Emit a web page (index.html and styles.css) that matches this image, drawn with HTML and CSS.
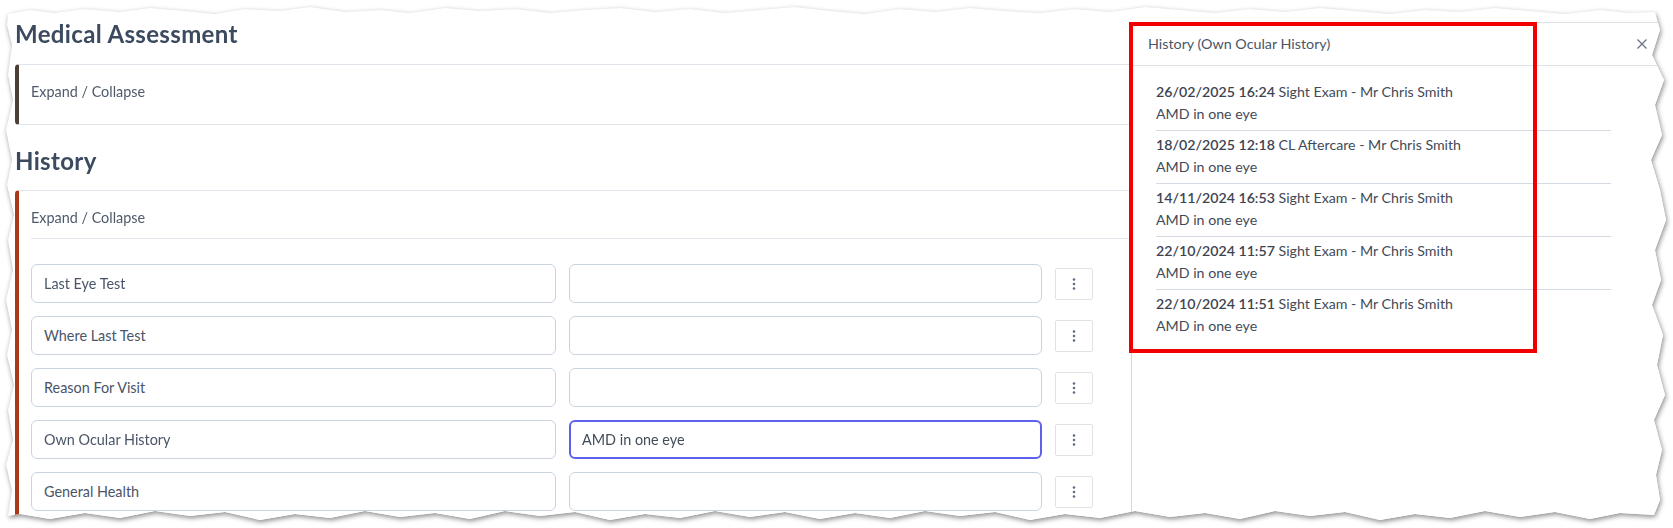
FILE: index.html
```html
<!DOCTYPE html>
<html lang="en">
<head>
<meta charset="utf-8">
<title>Medical Assessment</title>
<link rel="stylesheet" href="styles.css">
</head>
<body>
<div class="frame">
  <div class="sheet">
    <main class="main">
      <h2 class="section-title">Medical Assessment</h2>
      <div class="card card-dark">
        <div class="card-header card-header-collapsed">Expand / Collapse</div>
      </div>

      <h2 class="section-title section-title-gap">History</h2>
      <div class="card card-rust">
        <div class="card-header">Expand / Collapse</div>
        <div class="card-body">
          <div class="field-row">
            <div class="field-box">Last Eye Test</div>
            <div class="field-box"></div>
            <button class="menu-btn" type="button" aria-label="More"><svg width="4" height="12" viewBox="0 0 4 12"><circle cx="2" cy="1.5" r="1.3"/><circle cx="2" cy="6" r="1.3"/><circle cx="2" cy="10.5" r="1.3"/></svg></button>
          </div>
          <div class="field-row">
            <div class="field-box">Where Last Test</div>
            <div class="field-box"></div>
            <button class="menu-btn" type="button" aria-label="More"><svg width="4" height="12" viewBox="0 0 4 12"><circle cx="2" cy="1.5" r="1.3"/><circle cx="2" cy="6" r="1.3"/><circle cx="2" cy="10.5" r="1.3"/></svg></button>
          </div>
          <div class="field-row">
            <div class="field-box">Reason For Visit</div>
            <div class="field-box"></div>
            <button class="menu-btn" type="button" aria-label="More"><svg width="4" height="12" viewBox="0 0 4 12"><circle cx="2" cy="1.5" r="1.3"/><circle cx="2" cy="6" r="1.3"/><circle cx="2" cy="10.5" r="1.3"/></svg></button>
          </div>
          <div class="field-row">
            <div class="field-box">Own Ocular History</div>
            <div class="field-box field-focus">AMD in one eye</div>
            <button class="menu-btn" type="button" aria-label="More"><svg width="4" height="12" viewBox="0 0 4 12"><circle cx="2" cy="1.5" r="1.3"/><circle cx="2" cy="6" r="1.3"/><circle cx="2" cy="10.5" r="1.3"/></svg></button>
          </div>
          <div class="field-row">
            <div class="field-box">General Health</div>
            <div class="field-box"></div>
            <button class="menu-btn" type="button" aria-label="More"><svg width="4" height="12" viewBox="0 0 4 12"><circle cx="2" cy="1.5" r="1.3"/><circle cx="2" cy="6" r="1.3"/><circle cx="2" cy="10.5" r="1.3"/></svg></button>
          </div>
        </div>
      </div>
    </main>

    <aside class="panel">
      <div class="panel-header">
        <span class="panel-title">History (Own Ocular History)</span>
        <svg class="close-icon" width="10" height="10" viewBox="0 0 10 10"><path d="M0.5 0.5 L9.5 9.5 M9.5 0.5 L0.5 9.5"/></svg>
      </div>
      <div class="panel-body">
        <div class="history-item">
          <div><span class="stamp">26/02/2025 16:24</span> Sight Exam - Mr Chris Smith</div>
          <div>AMD in one eye</div>
        </div>
        <div class="history-item">
          <div><span class="stamp">18/02/2025 12:18</span> CL Aftercare - Mr Chris Smith</div>
          <div>AMD in one eye</div>
        </div>
        <div class="history-item">
          <div><span class="stamp">14/11/2024 16:53</span> Sight Exam - Mr Chris Smith</div>
          <div>AMD in one eye</div>
        </div>
        <div class="history-item">
          <div><span class="stamp">22/10/2024 11:57</span> Sight Exam - Mr Chris Smith</div>
          <div>AMD in one eye</div>
        </div>
        <div class="history-item">
          <div><span class="stamp">22/10/2024 11:51</span> Sight Exam - Mr Chris Smith</div>
          <div>AMD in one eye</div>
        </div>
      </div>
    </aside>

    <div class="highlight"></div>
  </div>
</div>
</body>
</html>
```

FILE: styles.css
```css
* { box-sizing: border-box; }

html, body {
  margin: 0;
  padding: 0;
  background: #ffffff;
}

body {
  font-family: "Lato", "Noto Sans", "Liberation Sans", sans-serif;
  font-size: 14.4px;
  color: #4a5568;
  width: 1673px;
  height: 528px;
  overflow: hidden;
}

.frame {
  width: 1673px;
  height: 528px;
  filter: drop-shadow(1px 2px 2.5px rgba(0, 0, 0, 0.45));
}

.sheet {
  position: relative;
  width: 1673px;
  height: 528px;
  background: #ffffff;
  display: flex;
  align-items: flex-start;
  overflow: hidden;
  clip-path: polygon(
    8px 14px, 30px 10px, 55px 13px, 85px 9px, 120px 12px, 150px 8px, 185px 11px, 215px 14px, 245px 9px, 280px 11px,
    310px 7px, 345px 12px, 380px 10px, 410px 13px, 445px 8px, 480px 11px, 515px 9px, 550px 13px, 585px 10px, 620px 8px,
    655px 12px, 690px 9px, 725px 13px, 760px 10px, 795px 7px, 830px 11px, 865px 14px, 900px 9px, 935px 12px, 970px 8px,
    1005px 11px, 1040px 13px, 1075px 9px, 1110px 12px, 1145px 7px, 1180px 10px, 1215px 13px, 1250px 9px, 1285px 12px,
    1320px 8px, 1355px 11px, 1390px 14px, 1425px 10px, 1460px 12px, 1495px 8px, 1530px 11px, 1565px 14px, 1600px 10px,
    1630px 13px, 1655px 12px,
    1660px 30px, 1652px 55px, 1664px 80px, 1655px 105px, 1662px 135px, 1651px 160px, 1660px 190px, 1666px 220px,
    1655px 250px, 1661px 280px, 1652px 305px, 1663px 335px, 1657px 365px, 1665px 395px, 1654px 420px, 1662px 450px,
    1656px 475px, 1660px 500px, 1654px 515px,
    1620px 513px, 1590px 519px, 1555px 512px, 1520px 517px, 1485px 511px, 1450px 518px, 1415px 514px, 1380px 520px,
    1345px 512px, 1310px 516px, 1275px 511px, 1240px 519px, 1205px 513px, 1170px 517px, 1135px 511px, 1100px 518px,
    1065px 514px, 1030px 520px, 995px 512px, 960px 516px, 925px 511px, 890px 518px, 855px 513px, 820px 519px,
    785px 512px, 750px 517px, 715px 511px, 680px 518px, 645px 514px, 610px 520px, 575px 512px, 540px 516px,
    505px 511px, 470px 519px, 435px 513px, 400px 517px, 365px 511px, 330px 518px, 295px 514px, 260px 520px,
    225px 512px, 190px 516px, 155px 511px, 120px 518px, 85px 513px, 50px 519px, 20px 514px, 8px 516px,
    12px 490px, 6px 465px, 13px 440px, 8px 410px, 14px 385px, 7px 355px, 12px 330px, 6px 300px, 13px 270px,
    8px 240px, 14px 215px, 7px 185px, 12px 160px, 6px 130px, 13px 100px, 8px 75px, 12px 45px, 7px 25px
  );
}

/* ---------- main column ---------- */
.main {
  flex: 1;
  min-width: 0;
  padding: 21px 0 0 15px;
}

.section-title {
  margin: 0;
  font-size: 24px;
  line-height: 26px;
  font-weight: 700;
  color: #3b4a5e;
  letter-spacing: 0.35px;
}

.section-title-gap {
  margin-top: 23px;
}

.card {
  margin-top: 17px;
  border: 1px solid #dfe4ea;
  border-right: none;
  border-radius: 4px 0 0 4px;
  padding-left: 12px;
  background: #ffffff;
}

.section-title-gap + .card {
  margin-top: 16px;
}

.card-dark { border-left: 4px solid #4b4037; }
.card-rust { border-left: 4px solid #a8391a; }

.card-header {
  padding: 17px 0 10px;
  line-height: 20px;
  color: #4f5b6c;
  border-bottom: 1px solid #dfe4ea;
}

.card-header-collapsed {
  padding: 17px 0 22px;
  border-bottom: none;
}

.card-body {
  padding: 25px 0 40px;
  display: flex;
  flex-direction: column;
  gap: 13px;
}

.field-row {
  display: grid;
  grid-template-columns: 525px 473px 38px;
  column-gap: 13px;
  align-items: center;
}

.field-box {
  height: 39px;
  border: 1px solid #cad3df;
  border-radius: 6px;
  padding: 0 12px;
  display: flex;
  align-items: center;
  color: #4a5568;
  background: #ffffff;
}

.field-focus {
  border: 2px solid #5e60ee;
  padding: 0 11px;
  color: #434c5a;
}

.menu-btn {
  width: 38px;
  height: 32px;
  border: 1px solid #dfe3e8;
  border-radius: 2px;
  background: #ffffff;
  padding: 0;
  display: flex;
  align-items: center;
  justify-content: center;
}

.menu-btn svg { fill: #5f6d86; display: block; }

/* ---------- side panel ---------- */
.panel {
  width: 542px;
  margin-top: 22px;
  height: 506px;
  border-top: 1px solid #dfe3e8;
  border-left: 1px solid #d3d9e1;
  background: #ffffff;
}

.panel-header {
  display: flex;
  align-items: center;
  justify-content: space-between;
  padding: 11px 26px 11px 16px;
  border-bottom: 1px solid #dfe3e8;
}

.panel-title {
  font-size: 14.3px;
  line-height: 20px;
  color: #4a5568;
}

.close-icon {
  display: block;
  stroke: #6b7280;
  stroke-width: 1.3;
  fill: none;
}

.panel-body {
  padding: 12px 62px 0 24px;
}

.history-item {
  padding: 3px 0 5px;
  line-height: 22px;
  font-size: 14.2px;
  color: #434a57;
  border-bottom: 1px solid #d5dbe3;
}

.history-item:last-child { border-bottom: none; }

.stamp { font-weight: 600; color: #3d4451; }

/* annotation overlay */
.highlight {
  position: absolute;
  left: 1129px;
  top: 22px;
  width: 408px;
  height: 331px;
  border: 4px solid #f20000;
  pointer-events: none;
}
```
